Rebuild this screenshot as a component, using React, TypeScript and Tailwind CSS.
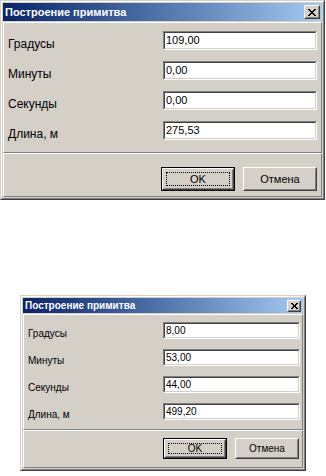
import React from "react";

type Size = "lg" | "sm";

const S = {
  lg: {
    outer: "w-[325px] h-[200px]",
    title: "h-[18px] pl-[2px] pr-[2px]",
    titleText: "text-[11px]",
    close: "w-[16px] h-[14px]",
    xs: 8,
    panel: "h-[131px] pt-[8px] pl-[4px] pr-[4px] gap-[10px]",
    label: "text-[12px] leading-[14px] mt-[6px]",
    input: "w-[154px] h-[19px]",
    inputText: "text-[11px] leading-[15px] pl-[1px]",
    btnPanel: "pt-[13px] pr-[4px] gap-[8px]",
    btn: "w-[74px] h-[24px] text-[11px]",
    focus: "inset-[3px]",
  },
  sm: {
    outer: "w-[286px] h-[176px]",
    title: "h-[15px] pl-[2px] pr-[2px]",
    titleText: "text-[10px]",
    close: "w-[14px] h-[12px]",
    xs: 7,
    panel: "h-[116px] pt-[7px] pl-[4px] pr-[2px] gap-[9px]",
    label: "text-[10px] leading-[12px] mt-[6px]",
    input: "w-[137px] h-[17px]",
    inputText: "text-[10px] leading-[13px] pl-[1px]",
    btnPanel: "pt-[7px] pr-[3px] gap-[8px]",
    btn: "w-[64px] h-[21px] text-[10px]",
    focus: "inset-[3px]",
  },
};

function Field({ size, label, value }: { size: Size; label: string; value: string }) {
  const s = S[size];
  return (
    <div className="flex items-start justify-between">
      <span className={s.label}>{label}</span>
      <div className={`${s.input} border border-t-[#808080] border-l-[#808080] border-b-white border-r-white`}>
        <div className="h-full border border-t-[#404040] border-l-[#404040] border-b-[#d4d0c8] border-r-[#d4d0c8] bg-white">
          <div className={s.inputText}>{value}</div>
        </div>
      </div>
    </div>
  );
}

function Button({ size, text, def }: { size: Size; text: string; def?: boolean }) {
  const s = S[size];
  const inner = (
    <div className="relative h-full border border-t-white border-l-white border-b-[#404040] border-r-[#404040]">
      <div className="h-full border border-t-[#d4d0c8] border-l-[#d4d0c8] border-b-[#808080] border-r-[#808080] flex items-center justify-center">
        {text}
      </div>
      {def && <div className={`absolute ${s.focus} border border-dotted border-black`} />}
    </div>
  );
  return <div className={`${s.btn} ${def ? "border border-black" : ""}`}>{inner}</div>;
}

function Dialog({ size, values }: { size: Size; values: string[] }) {
  const s = S[size];
  const labels = ["Градусы", "Минуты", "Секунды", "Длина, м"];
  return (
    <div
      className={`${s.outer} flex flex-col bg-[#d4d0c8] border border-t-[#d4d0c8] border-l-[#d4d0c8] border-b-[#404040] border-r-[#404040] text-black`}
      style={{ fontFamily: '"Liberation Sans", Arial, sans-serif' }}
    >
      <div className="flex-1 flex flex-col border border-t-white border-l-white border-b-[#808080] border-r-[#808080] p-[1px]">
        <div className={`${s.title} flex items-center justify-between bg-gradient-to-r from-[#0a246a] to-[#a6caf0]`}>
          <span className={`${s.titleText} font-bold text-white`}>Построение примитва</span>
          <div className={`${s.close} border border-t-white border-l-white border-b-[#404040] border-r-[#404040] bg-[#d4d0c8]`}>
            <div className="h-full border border-t-[#d4d0c8] border-l-[#d4d0c8] border-b-[#808080] border-r-[#808080] flex items-center justify-center">
              <svg width={s.xs} height={s.xs - 1} viewBox="0 0 8 7" shapeRendering="crispEdges">
                <path d="M0 0h2v1h-2zM6 0h2v1h-2zM1 1h2v1h-2zM5 1h2v1h-2zM2 2h4v1h-4zM3 3h2v1h-2zM2 4h4v1h-4zM1 5h2v1h-2zM5 5h2v1h-2zM0 6h2v1h-2zM6 6h2v1h-2z" fill="#000" />
              </svg>
            </div>
          </div>
        </div>
        <div className={`${s.panel} mt-[1px] flex flex-col border border-t-white border-l-white border-b-[#808080] border-r-[#808080]`}>
          {labels.map((l, i) => (
            <Field key={l} size={size} label={l} value={values[i]} />
          ))}
        </div>
        <div className={`${s.btnPanel} flex-1 flex justify-end items-start border border-t-white border-l-white border-b-[#808080] border-r-[#808080]`}>
          <Button size={size} text="OK" def />
          <Button size={size} text="Отмена" />
        </div>
      </div>
    </div>
  );
}

export default function App() {
  return (
    <div className="w-[326px] h-[476px] bg-white flex flex-col overflow-hidden">
      <Dialog size="lg" values={["109,00", "0,00", "0,00", "275,53"]} />
      <div className="mt-[95px] ml-[20px]">
        <Dialog size="sm" values={["8,00", "53,00", "44,00", "499,20"]} />
      </div>
    </div>
  );
}
